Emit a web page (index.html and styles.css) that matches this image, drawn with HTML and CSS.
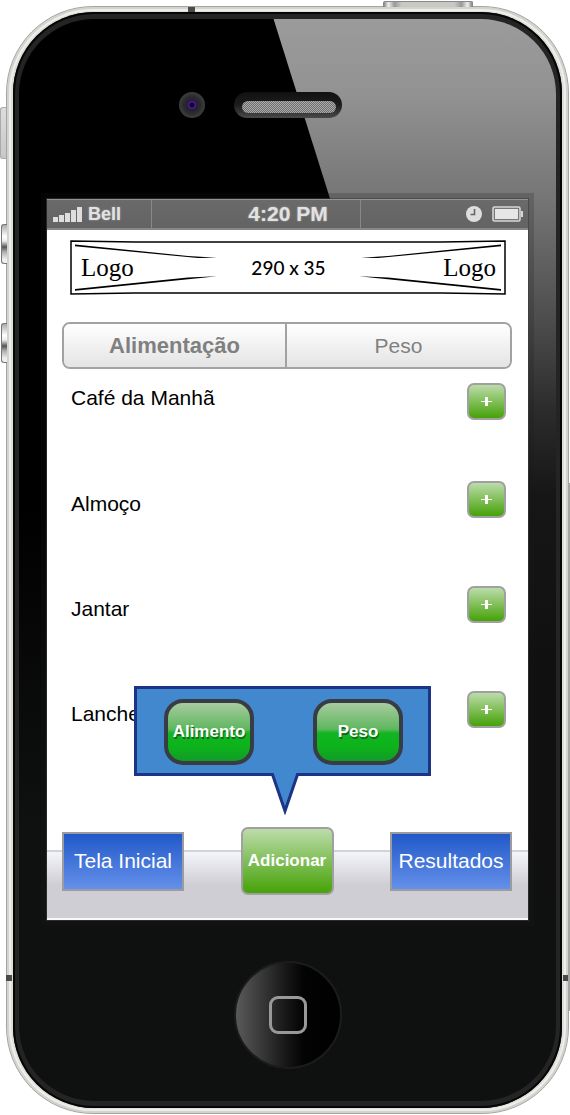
FILE: index.html
```html
<!DOCTYPE html>
<html lang="pt-BR">
<head>
<meta charset="utf-8">
<meta name="viewport" content="width=device-width, initial-scale=1">
<title>Alimentação</title>
<link rel="stylesheet" href="styles.css">
</head>
<body>
<div class="phone">
  <span class="side-key side-key--mute"></span>
  <span class="side-key side-key--up"></span>
  <span class="side-key side-key--down"></span>
  <span class="power-key"></span>
  <span class="seam seam--top"></span>
  <span class="seam seam--left"></span>
  <span class="seam seam--right"></span>
  <span class="edge-strip"></span>
  <div class="bezel">
    <div class="face">
      <div class="face-top">
        <span class="camera"></span>
        <span class="earpiece"></span>
      </div>

      <div class="screen">
        <header class="status">
          <div class="carrier">
            <svg class="signal" viewBox="0 0 30 16" aria-hidden="true">
              <path d="M0 11h5v5H0zM6 9h5v7H6zM12 7h5v9h-5zM18 4h5v12h-5zM24 1h5v15h-5z"/>
            </svg>
            <span>Bell</span>
          </div>
          <div class="clock">4:20 PM</div>
          <div class="indicators">
            <svg class="alarm" viewBox="0 0 16 16" aria-hidden="true">
              <circle cx="8" cy="8" r="8" fill="#dedede"/>
              <path d="M8.500 3v5.500H4.500" fill="none" stroke="#666" stroke-width="1.600"/>
            </svg>
            <svg class="battery" viewBox="0 0 32 16" aria-hidden="true">
              <rect x="1" y="1" width="27" height="14" rx="1.500" fill="#777" stroke="#d6d6d6" stroke-width="1.600"/>
              <rect x="3" y="3" width="23" height="10" fill="#e6e6e6"/>
              <path d="M29 5h2v6h-2z" fill="#d6d6d6"/>
            </svg>
          </div>
        </header>

        <main class="content">
          <div class="banner">
            <svg class="banner-lines" viewBox="0 0 436 54" preserveAspectRatio="none" aria-hidden="true">
              <path d="M1 1 65 2H371L435 1V53L371 52H65L1 53Z" fill="none" stroke="#000" stroke-width="1.500"/>
              <path d="M5 4.500 118 15.700 147 17.500 128 17.700 5 6.200ZM5 48.200 118 36.800 147 35.500 128 37.500 5 49.800ZM431 4.500 318 15.700 291 17.500 308 17.700 431 6.200ZM431 48.200 318 36.800 289 35.500 308 37.500 431 49.800Z"/>
            </svg>
            <span class="banner-logo">Logo</span>
            <span class="banner-size">290 x 35</span>
            <span class="banner-logo">Logo</span>
          </div>

          <div class="tabs" role="tablist">
            <button class="tab tab--active" type="button" role="tab" aria-selected="true">Alimentação</button>
            <button class="tab" type="button" role="tab" aria-selected="false">Peso</button>
          </div>

          <ul class="meals">
            <li class="meal"><span>Café da Manhã</span><button class="add" type="button" aria-label="Adicionar ao café da manhã"><span class="plus"></span></button></li>
            <li class="meal"><span>Almoço</span><button class="add" type="button" aria-label="Adicionar ao almoço"><span class="plus"></span></button></li>
            <li class="meal"><span>Jantar</span><button class="add" type="button" aria-label="Adicionar ao jantar"><span class="plus"></span></button></li>
            <li class="meal"><span>Lanche</span><button class="add" type="button" aria-label="Adicionar ao lanche"><span class="plus"></span></button></li>
          </ul>
        </main>

        <nav class="toolbar">
          <button class="nav-button" type="button">Tela Inicial</button>
          <div class="add-menu">
            <button class="add-main" type="button">Adicionar</button>
            <div class="popover">
              <button class="pill" type="button">Alimento</button>
              <button class="pill" type="button">Peso</button>
              <svg class="popover-tail" viewBox="0 0 30 42" aria-hidden="true">
                <path d="M2 0 15 38 28 0" fill="#4288ce" stroke="#1b3484" stroke-width="3"/>
              </svg>
            </div>
          </div>
          <button class="nav-button" type="button">Resultados</button>
        </nav>
      </div>

      <div class="face-bottom">
        <button class="home" type="button" aria-label="Início"><span class="home-mark"></span></button>
      </div>
    </div>
  </div>
</div>
</body>
</html>
```
FILE: styles.css
```css
* {
  box-sizing: border-box;
}

body {
  margin: 0;
  padding: 6px 1px 0 6px;
  background: #fff;
  color: #000;
  font-family: "Liberation Sans", Arial, sans-serif;
  font-size: 21px;
}

button {
  margin: 0;
  padding: 0;
  font: inherit;
  cursor: pointer;
}

/* Handset */
.phone {
  position: relative;
  padding: 5px 6px;
  border: 1px solid #a5a5a3;
  border-radius: 87px;
  background: #deded9;
  box-shadow: inset 0 0 0 2px #d2d2ce, inset 0 0 0 4px #eeeeeb;
}

.bezel {
  padding: 7px 6px;
  border-radius: 81px;
  background: #242424;
  box-shadow: inset 0 0 0 2px #050505;
}

.face {
  position: relative;
  overflow: hidden;
  padding: 0 28px;
  border-radius: 75px;
  background: linear-gradient(#000 0%, #000 45%, #0f1110 75%);
}

.face::before {
  content: "";
  position: absolute;
  inset: 0;
  background: linear-gradient(#9b9b9b 0%, #929292 7%, #747474 17%, #4c4c4c 28%, #2c2c2c 36%, #161616 44%, #101010 60%);
  clip-path: polygon(47.4% 0, 100% 0, 100% 83%);
}

.side-key,
.power-key,
.seam,
.edge-strip {
  position: absolute;
}

.side-key {
  left: -6px;
  width: 6px;
  height: 40px;
  border: 1px solid #777;
  border-right: 0;
  border-radius: 3px 0 0 3px;
  background: linear-gradient(#aaa 0%, #fff 30%, #eee 42%, #555 58%, #aaa 70%, #eee 90%);
}

.side-key--mute {
  top: 100px;
  left: -7px;
  height: 52px;
  border-color: #aaa;
  background: linear-gradient(#ddd, #c8c8c8);
}

.side-key--up {
  top: 217px;
}

.side-key--down {
  top: 316px;
}

.power-key {
  top: -6px;
  right: 95px;
  width: 90px;
  height: 6px;
  border: 1px solid #888;
  border-bottom: 0;
  border-radius: 2px 2px 0 0;
  background: linear-gradient(90deg, #888, #eee 5%, #999 12%, #c9c9c4 20%, #c9c9c4 80%, #999 88%, #eee 95%, #888);
}

.seam {
  background: #4a4a4a;
}

.seam--top {
  top: 0;
  left: 181px;
  width: 7px;
  height: 5px;
}

.seam--left,
.seam--right {
  bottom: 132px;
  width: 6px;
  height: 6px;
}

.seam--left {
  left: -1px;
}

.seam--right {
  right: -1px;
}

.edge-strip {
  top: 476px;
  right: -2px;
  width: 2px;
  height: 528px;
  background: #a5a5a3;
}

.face-top {
  position: relative;
  display: grid;
  grid-template-columns: 1fr auto 1fr;
  align-items: center;
  column-gap: 29px;
  height: 180px;
  padding-bottom: 8px;
}

.camera {
  justify-self: end;
  width: 26px;
  height: 26px;
  border-radius: 50%;
  background: radial-gradient(circle, #0d0220 0 2px, #4d1aa0 3px, #24202f 5px, #2b2d2f 9px, #3b3b3b 12px);
}

.earpiece {
  width: 108px;
  height: 26px;
  padding: 9px 6px 5px 8px;
  border-radius: 13px;
  background: linear-gradient(#111 0%, #1c1c1c 50%, #4a4a4a 100%);
}

.earpiece::before {
  content: "";
  display: block;
  height: 12px;
  border-radius: 6px;
  background: repeating-conic-gradient(#aaa 0 25%, #707070 0 50%) 0 0 / 2px 2px;
}

.face-bottom {
  position: relative;
  display: flex;
  align-items: center;
  justify-content: center;
  height: 181px;
  padding-top: 8px;
}

.home {
  display: grid;
  place-items: center;
  width: 108px;
  height: 108px;
  border: 2px solid #1c1c1c;
  border-radius: 50%;
  background: linear-gradient(90deg, #5a5a5a 0%, #3c3c3c 22%, #171717 48%, #030303 65%, #000 100%);
}

.home-mark {
  width: 38px;
  height: 38px;
  border: 3px solid #999;
  border-radius: 9px;
}

/* Screen */
.screen {
  position: relative;
  background: #fff;
  box-shadow: 0 0 0 1px rgba(60, 60, 60, 0.6), 0 0 0 6px rgba(24, 24, 24, 0.2);
}

.status {
  display: grid;
  grid-template-columns: 105px 1fr 168px;
  align-items: stretch;
  height: 31px;
  border-top: 1px solid #929292;
  border-bottom: 2px solid #888;
  background: linear-gradient(#6a6a6a, #636363);
  color: #e2e2e2;
  font-weight: bold;
  text-shadow: 0 0 2px #aaa;
}

.status > * {
  display: flex;
  align-items: center;
}

.carrier {
  gap: 5px;
  padding-left: 6px;
  border-right: 1px solid #888;
  font-size: 18px;
}

.signal {
  width: 30px;
  height: 16px;
  fill: #dedede;
}

.clock {
  justify-content: center;
  padding-left: 64px;
}

.indicators {
  justify-content: flex-end;
  gap: 10px;
  padding-right: 4px;
  border-left: 1px solid #888;
}

.alarm {
  width: 16px;
  height: 16px;
}

.battery {
  width: 32px;
  height: 16px;
}

.content {
  padding: 10px 16px 0 15px;
}

.banner {
  position: relative;
  display: flex;
  align-items: center;
  justify-content: space-between;
  height: 55px;
  margin: 0 6px 0 8px;
  padding: 0 10px 0 11px;
}

.banner-lines {
  position: absolute;
  inset: 0;
  width: 100%;
  height: 100%;
}

.banner-logo {
  font-family: "Liberation Serif", "Times New Roman", serif;
  font-size: 25px;
}

.banner-size {
  font-family: Lato, sans-serif;
  font-size: 19px;
  font-weight: 500;
}

.tabs {
  display: grid;
  grid-template-columns: 1fr 1fr;
  height: 47px;
  margin-top: 27px;
  overflow: hidden;
  border: 2px solid #a2a2a2;
  border-radius: 8px;
}

.tab {
  border: 0;
  background: linear-gradient(#fff, #e4e4e4);
  color: #808080;
}

.tab--active {
  border-right: 2px solid #a2a2a2;
  font-size: 22px;
  font-weight: bold;
}

.meals {
  display: grid;
  gap: 68px;
  margin: 0;
  padding: 14px 6px 0 9px;
  list-style: none;
}

.meal {
  display: flex;
  align-items: flex-end;
  justify-content: space-between;
  height: 37px;
  line-height: 29px;
}

.meal:first-child {
  align-items: flex-start;
  margin-bottom: -7px;
}

.add,
.add-main {
  border: 2px solid #a0a0a0;
  background: linear-gradient(#bcdcaa, #46a208);
}

.add {
  display: grid;
  place-items: center;
  width: 39px;
  height: 37px;
  border-radius: 7px;
}

.plus {
  width: 11px;
  height: 9px;
  background:
    linear-gradient(#fff, #fff) center / 100% 1px no-repeat,
    linear-gradient(#fff, #fff) center / 3px 100% no-repeat;
}

.toolbar {
  display: flex;
  align-items: center;
  justify-content: space-between;
  margin-top: 99px;
  padding: 0 16px 23px 15px;
  background: linear-gradient(transparent 23px, #d2d2dc 23px, #d2d2dc 25px, #f4f5fb 25px, #cfced5 58px);
  border-bottom: 2px solid #f4f8f8;
}

.nav-button {
  width: 122px;
  height: 59px;
  border: 2px solid #9b9ba0;
  background: linear-gradient(#2259c8, #6490ea);
  color: #fff;
}

.add-menu {
  position: relative;
}

.add-main {
  display: block;
  width: 93px;
  height: 68px;
  border-radius: 7px;
  color: #fff;
  font-size: 17px;
  font-weight: bold;
}

.popover {
  position: absolute;
  bottom: calc(100% + 51px);
  left: calc(50% - 153px);
  display: flex;
  justify-content: space-between;
  width: 297px;
  padding: 10px 25px 8px 27px;
  border: 3px solid #1b3484;
  background: #4288ce;
}

.popover-tail {
  position: absolute;
  top: 100%;
  left: 133px;
  width: 30px;
  height: 42px;
}

.pill {
  width: 90px;
  height: 66px;
  border: 4px solid #383c44;
  border-radius: 19px;
  background: linear-gradient(#a9cba0 0%, #5fb75f 45%, #10b520 52%, #0db31b 75%, #129b28 100%);
  color: #fff;
  font-size: 17px;
  font-weight: bold;
  text-shadow: 1px 2px 0 #17681c;
}
```
